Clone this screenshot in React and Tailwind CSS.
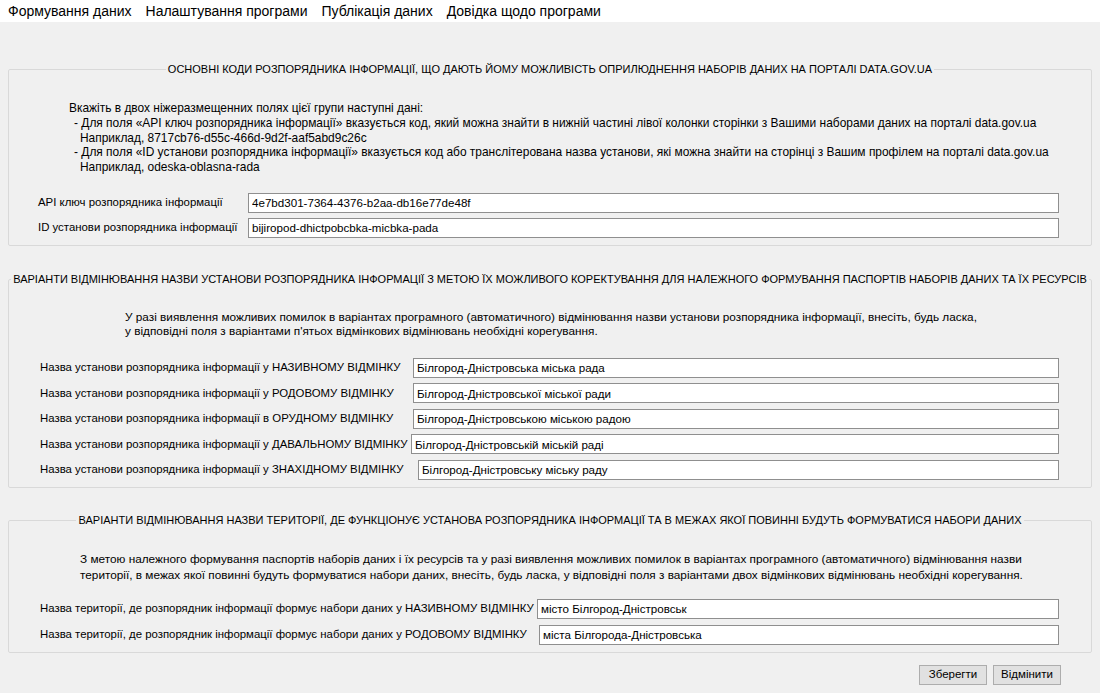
import React from "react";

const inputCls =
    "h-[20px] flex-1 min-w-0 bg-white border border-[#8f8f8f] px-[3px] text-[11.6px] text-black outline-none font-['Liberation_Sans',Arial,sans-serif]";

const Row = ({ label, value, labelW }) => (
    <div className="flex items-center">
        <span className={`shrink-0 whitespace-nowrap text-[11.4px] ${labelW}`}>{label}</span>
        <input className={inputCls} defaultValue={value} />
    </div>
);

const Group = ({ title, children, className = "" }) => (
    <fieldset className={`border border-[#d9d9d9] rounded-[2px] min-w-0 ${className}`}>
        <legend className="mx-auto px-[2px] leading-[15px] whitespace-nowrap text-[11px]">{title}</legend>
        {children}
    </fieldset>
);

export default function App() {
    return (
        <div className="w-[1100px] h-[693px] overflow-hidden bg-[#f0f0f0] text-[11.8px] text-black font-['Liberation_Sans',Arial,sans-serif]">
            <nav className="h-[22px] bg-white flex items-center gap-[14px] pl-[8px] text-[14px]">
                <span>Формування даних</span>
                <span>Налаштування програми</span>
                <span>Публікація даних</span>
                <span>Довідка щодо програми</span>
            </nav>

            <div className="px-[8px]">
                <Group className="mt-[40px]" title="ОСНОВНІ КОДИ РОЗПОРЯДНИКА ІНФОРМАЦІЇ, ЩО ДАЮТЬ ЙОМУ МОЖЛИВІСТЬ ОПРИЛЮДНЕННЯ НАБОРІВ ДАНИХ НА ПОРТАЛІ DATA.GOV.UA">
                    <div className="mt-[24px] pl-[60px] leading-[14.75px] text-[11.95px]">
                        <p>Вкажіть в двох ніжеразмещенних полях цієї групи наступні дані:</p>
                        <p className="pl-[5px]">- Для поля «API ключ розпорядника інформації» вказується код, який можна знайти в нижній частині лівої колонки сторінки з Вашими наборами даних на порталі data.gov.ua</p>
                        <p className="pl-[11px]">Наприклад, 8717cb76-d55c-466d-9d2f-aaf5abd9c26c</p>
                        <p className="pl-[5px]">- Для поля «ID установи розпорядника інформації» вказується код або транслітерована назва установи, які можна знайти на сторінці з Вашим профілем на порталі data.gov.ua</p>
                        <p className="pl-[11px]">Наприклад, odeska-oblasna-rada</p>
                    </div>
                    <div className="mt-[18px] mb-[7px] pl-[29px] pr-[32px] flex flex-col gap-[5px]">
                        <Row labelW="w-[210px]" label="API ключ розпорядника інформації" value="4e7bd301-7364-4376-b2aa-db16e77de48f" />
                        <Row labelW="w-[210px]" label="ID установи розпорядника інформації" value="bijiropod-dhictpobcbka-micbka-pada" />
                    </div>
                </Group>

                <Group className="mt-[26px]" title="ВАРІАНТИ ВІДМІНЮВАННЯ НАЗВИ УСТАНОВИ РОЗПОРЯДНИКА ІНФОРМАЦІЇ З МЕТОЮ ЇХ МОЖЛИВОГО КОРЕКТУВАННЯ ДЛЯ НАЛЕЖНОГО ФОРМУВАННЯ ПАСПОРТІВ НАБОРІВ ДАНИХ ТА ЇХ РЕСУРСІВ">
                    <div className="mt-[23px] pl-[116px] leading-[14px]">
                        <p>У разі виявлення можливих помилок в варіантах програмного (автоматичного) відмінювання назви установи розпорядника інформації, внесіть, будь ласка,</p>
                        <p>у відповідні поля з варіантами п'ятьох відмінкових відмінювань необхідні корегування.</p>
                    </div>
                    <div className="mt-[20px] mb-[7px] pl-[31px] pr-[32px] flex flex-col gap-[5.5px]">
                        <Row labelW="w-[373px]" label="Назва установи розпорядника інформації у НАЗИВНОМУ ВІДМІНКУ" value="Білгород-Дністровська міська рада" />
                        <Row labelW="w-[373px]" label="Назва установи розпорядника інформації у РОДОВОМУ ВІДМІНКУ" value="Білгород-Дністровської міської ради" />
                        <Row labelW="w-[373px]" label="Назва установи розпорядника інформації в ОРУДНОМУ ВІДМІНКУ" value="Білгород-Дністровською міською радою" />
                        <Row labelW="w-[371px]" label="Назва установи розпорядника інформації у ДАВАЛЬНОМУ ВІДМІНКУ" value="Білгород-Дністровській міській раді" />
                        <Row labelW="w-[378px]" label="Назва установи розпорядника інформації у ЗНАХІДНОМУ ВІДМІНКУ" value="Білгород-Дністровську міську раду" />
                    </div>
                </Group>

                <Group className="mt-[25px]" title="ВАРІАНТИ ВІДМІНЮВАННЯ НАЗВИ ТЕРИТОРІЇ, ДЕ ФУНКЦІОНУЄ УСТАНОВА РОЗПОРЯДНИКА ІНФОРМАЦІЇ ТА В МЕЖАХ ЯКОЇ ПОВИННІ БУДУТЬ ФОРМУВАТИСЯ НАБОРИ ДАНИХ">
                    <div className="mt-[23px] pl-[71px] leading-[16px]">
                        <p>З метою належного формування паспортів наборів даних і їх ресурсів та у разі виявлення можливих помилок в варіантах програмного (автоматичного) відмінювання назви</p>
                        <p>території, в межах якої повинні будуть формуватися набори даних, внесіть, будь ласка, у відповідні поля з варіантами двох відмінкових відмінювань необхідні корегування.</p>
                    </div>
                    <div className="mt-[16px] mb-[7px] pl-[31px] pr-[32px] flex flex-col gap-[6px]">
                        <Row labelW="w-[497px]" label="Назва території, де розпорядник інформації формує набори даних у НАЗИВНОМУ ВІДМІНКУ" value="місто Білгород-Дністровськ" />
                        <Row labelW="w-[499px]" label="Назва території, де розпорядник інформації формує набори даних у РОДОВОМУ ВІДМІНКУ" value="міста Білгорода-Дністровська" />
                    </div>
                </Group>

                <div className="mt-[12px] flex justify-end gap-[6px] pr-[31px]">
                    <button className="w-[68px] h-[20px] bg-[#e1e1e1] border border-[#adadad] text-[11.5px] font-normal">Зберегти</button>
                    <button className="w-[68px] h-[20px] bg-[#e1e1e1] border border-[#adadad] text-[11.5px] font-normal">Відмінити</button>
                </div>
            </div>
        </div>
    );
}
